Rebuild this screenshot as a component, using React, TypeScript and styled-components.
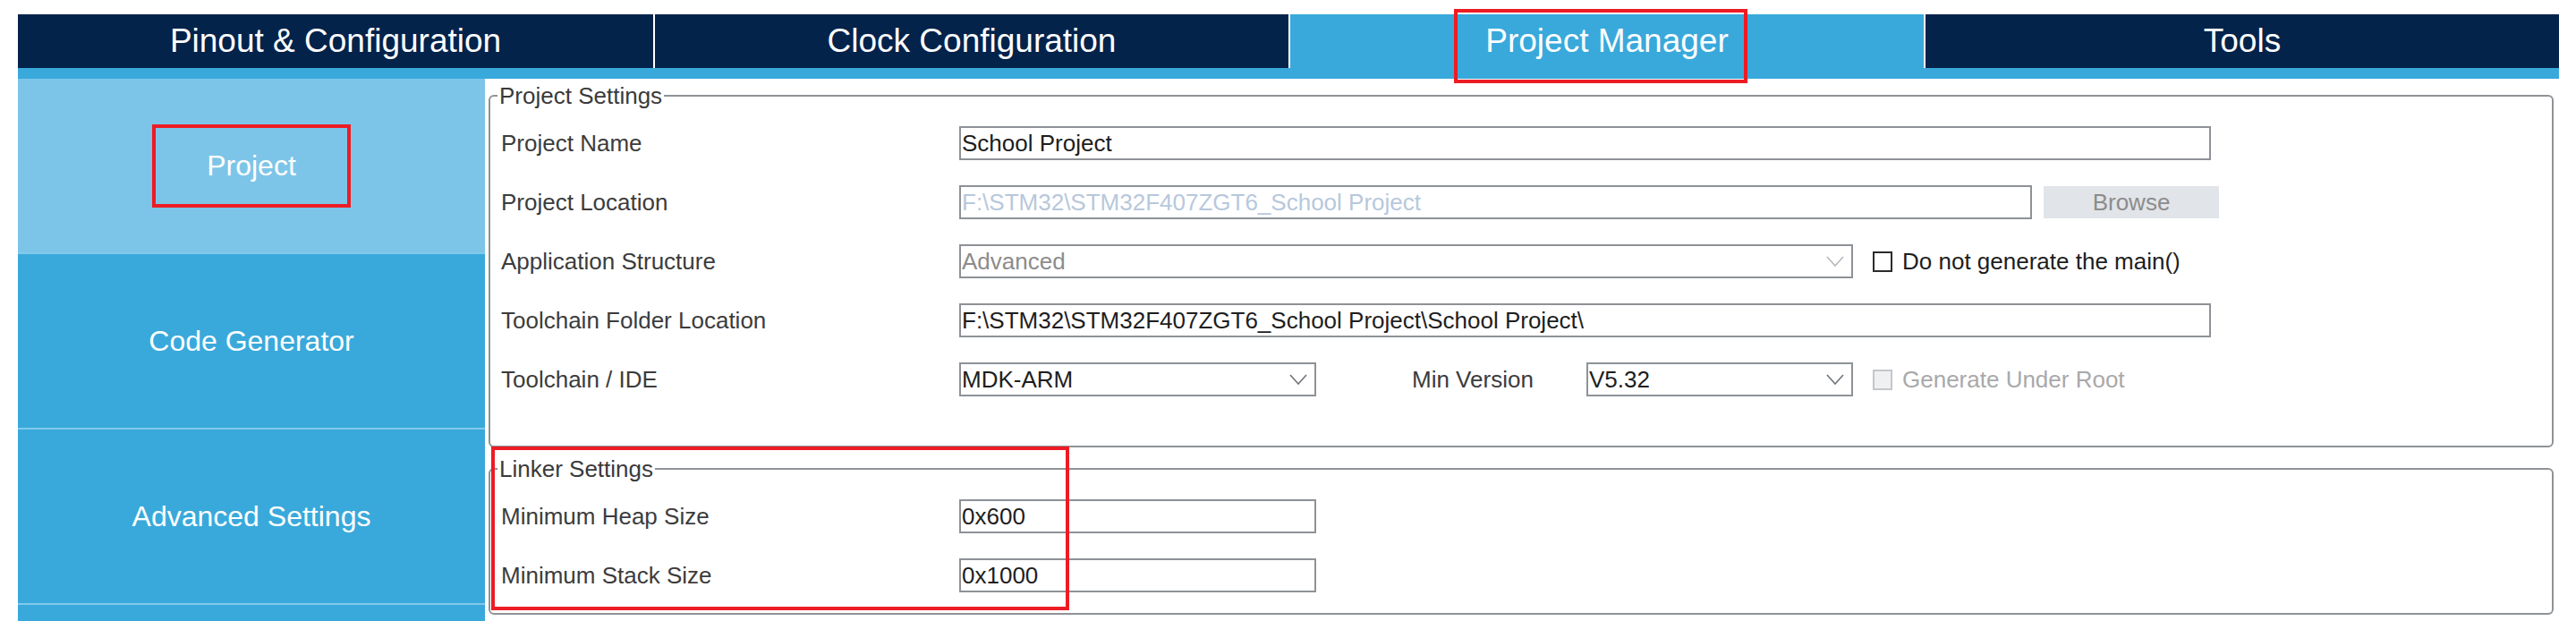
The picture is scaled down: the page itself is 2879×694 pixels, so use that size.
import React from "react";
import styled, { createGlobalStyle } from "styled-components";

const GlobalStyle = createGlobalStyle`
  html, body { margin: 0; padding: 0; background: #ffffff; overflow: hidden; }
  body { font-family: "Liberation Sans", Arial, sans-serif; }
  *, *::before, *::after { box-sizing: border-box; }
`;

const NAVY = "#04234b";
const BLUE = "#39a9db";
const LIGHT = "#7dc5e8";
const RED = "#ed1c24";
const GREY_BORDER = "#8f9397";

const Page = styled.div`
  padding: 16px 19px 0 20px;
  width: 2879px;
`;

const TabBar = styled.div`
  display: grid;
  grid-template-columns: repeat(4, 1fr);
  height: 60px;
`;

const Tab = styled.div<{ $active?: boolean }>`
  position: relative;
  display: flex;
  align-items: center;
  justify-content: center;
  background: ${(p) => (p.$active ? BLUE : NAVY)};
  color: #ffffff;
  font-size: 37px;
  & + & {
    border-left: 2px solid #ffffff;
  }
`;

const TabMarker = styled.div`
  position: absolute;
  left: 183px;
  top: -6px;
  width: 328px;
  height: 83px;
  border: 4px solid ${RED};
  z-index: 2;
`;

const Strip = styled.div`
  height: 12px;
  background: ${BLUE};
`;

const Body = styled.div`
  display: flex;
  height: 606px;
`;

const Sidebar = styled.nav`
  width: 522px;
  flex-shrink: 0;
  background: ${BLUE};
  display: flex;
  flex-direction: column;
  overflow: hidden;
`;

const NavItem = styled.div<{ $active?: boolean }>`
  height: 196px;
  flex-shrink: 0;
  border-bottom: 2px solid #82c9ea;
  background: ${(p) => (p.$active ? LIGHT : "transparent")};
  display: flex;
  align-items: center;
  justify-content: center;
  color: #ffffff;
  font-size: 32px;
`;

const NavLabel = styled.div<{ $marked?: boolean }>`
  display: flex;
  align-items: center;
  justify-content: center;
  ${(p) =>
    p.$marked
      ? `width: 222px; height: 93px; border: 4px solid ${RED};`
      : ""}
`;

const Main = styled.main`
  flex: 1;
  padding: 4px 6px 0 4px;
  display: flex;
  flex-direction: column;
`;

const Section = styled.div<{ $gap?: number }>`
  position: relative;
  margin-top: ${(p) => p.$gap ?? 0}px;
`;

const Group = styled.fieldset`
  margin: 0;
  padding: 0;
  min-width: 0;
  border: 2px solid ${GREY_BORDER};
  border-radius: 6px;
`;

const Legend = styled.legend`
  margin-left: 8px;
  padding: 0 2px;
  font-size: 26px;
  line-height: 30px;
  color: #3a3a3a;
`;

const Rows = styled.div<{ $bottom: number }>`
  display: flex;
  flex-direction: column;
  gap: 28px;
  padding: 19px 0 ${(p) => p.$bottom}px 12px;
`;

const Row = styled.div`
  display: flex;
  align-items: center;
  height: 38px;
`;

const Label = styled.div`
  width: 512px;
  flex-shrink: 0;
  font-size: 26px;
  color: #3c3c3c;
  white-space: nowrap;
`;

const Box = styled.div<{ $w: number; $tone?: "normal" | "muted" | "faded" }>`
  width: ${(p) => p.$w}px;
  height: 38px;
  flex-shrink: 0;
  border: 2px solid #8e9296;
  background: #ffffff;
  display: flex;
  align-items: center;
  padding-left: 1px;
  font-size: 26px;
  white-space: nowrap;
  overflow: hidden;
  color: ${(p) =>
    p.$tone === "faded" ? "#b7c8dc" : p.$tone === "muted" ? "#8c8c8c" : "#1e1e1e"};
`;

const Chevron = styled.svg`
  margin-left: auto;
  margin-right: 8px;
  flex-shrink: 0;
`;

const BrowseButton = styled.div`
  margin-left: 13px;
  width: 196px;
  height: 36px;
  background: #e1e4e8;
  color: #8c8c8c;
  font-size: 26px;
  display: flex;
  align-items: center;
  justify-content: center;
`;

const CheckWrap = styled.div<{ $disabled?: boolean }>`
  margin-left: 22px;
  display: flex;
  align-items: center;
  font-size: 26px;
  white-space: nowrap;
  color: ${(p) => (p.$disabled ? "#a9a9a9" : "#1e1e1e")};
`;

const CheckBox = styled.span<{ $disabled?: boolean }>`
  width: 22px;
  height: 23px;
  margin-right: 11px;
  border: 2px solid ${(p) => (p.$disabled ? "#c4c7ca" : "#2b2b2b")};
  background: ${(p) => (p.$disabled ? "#eef0f2" : "#ffffff")};
  flex-shrink: 0;
`;

const MinLabel = styled.div`
  margin-left: 107px;
  width: 195px;
  flex-shrink: 0;
  font-size: 26px;
  color: #3c3c3c;
`;

const SectionMarker = styled.div`
  position: absolute;
  left: 3px;
  top: -10px;
  width: 646px;
  height: 183px;
  border: 4px solid ${RED};
  pointer-events: none;
`;

const Down: React.FC<{ light?: boolean }> = ({ light }) => (
  <Chevron width="20" height="12" viewBox="0 0 20 12">
    <path
      d="M1 1 L10 11 L19 1"
      fill="none"
      stroke={light ? "#b4b8bc" : "#6f7378"}
      strokeWidth="1.6"
    />
  </Chevron>
);

export default function App() {
  return (
    <>
      <GlobalStyle />
      <Page>
        <TabBar>
          <Tab>Pinout &amp; Configuration</Tab>
          <Tab>Clock Configuration</Tab>
          <Tab $active>
            Project Manager
            <TabMarker />
          </Tab>
          <Tab>Tools</Tab>
        </TabBar>
        <Strip />
        <Body>
          <Sidebar>
            <NavItem $active>
              <NavLabel $marked>Project</NavLabel>
            </NavItem>
            <NavItem>
              <NavLabel>Code Generator</NavLabel>
            </NavItem>
            <NavItem>
              <NavLabel>Advanced Settings</NavLabel>
            </NavItem>
            <NavItem />
          </Sidebar>
          <Main>
            <Section>
              <Group>
                <Legend>Project Settings</Legend>
                <Rows $bottom={55}>
                  <Row>
                    <Label>Project Name</Label>
                    <Box $w={1399}>School Project</Box>
                  </Row>
                  <Row>
                    <Label>Project Location</Label>
                    <Box $w={1199} $tone="faded">
                      F:\STM32\STM32F407ZGT6_School Project
                    </Box>
                    <BrowseButton>Browse</BrowseButton>
                  </Row>
                  <Row>
                    <Label>Application Structure</Label>
                    <Box $w={999} $tone="muted">
                      Advanced
                      <Down light />
                    </Box>
                    <CheckWrap>
                      <CheckBox />
                      Do not generate the main()
                    </CheckWrap>
                  </Row>
                  <Row>
                    <Label>Toolchain Folder Location</Label>
                    <Box $w={1399}>
                      F:\STM32\STM32F407ZGT6_School Project\School Project\
                    </Box>
                  </Row>
                  <Row>
                    <Label>Toolchain / IDE</Label>
                    <Box $w={399}>
                      MDK-ARM
                      <Down />
                    </Box>
                    <MinLabel>Min Version</MinLabel>
                    <Box $w={298}>
                      V5.32
                      <Down />
                    </Box>
                    <CheckWrap $disabled>
                      <CheckBox $disabled />
                      Generate Under Root
                    </CheckWrap>
                  </Row>
                </Rows>
              </Group>
            </Section>
            <Section $gap={9}>
              <Group>
                <Legend>Linker Settings</Legend>
                <Rows $bottom={23}>
                  <Row>
                    <Label>Minimum Heap Size</Label>
                    <Box $w={399}>0x600</Box>
                  </Row>
                  <Row>
                    <Label>Minimum Stack Size</Label>
                    <Box $w={399}>0x1000</Box>
                  </Row>
                </Rows>
              </Group>
              <SectionMarker />
            </Section>
          </Main>
        </Body>
      </Page>
    </>
  );
}
